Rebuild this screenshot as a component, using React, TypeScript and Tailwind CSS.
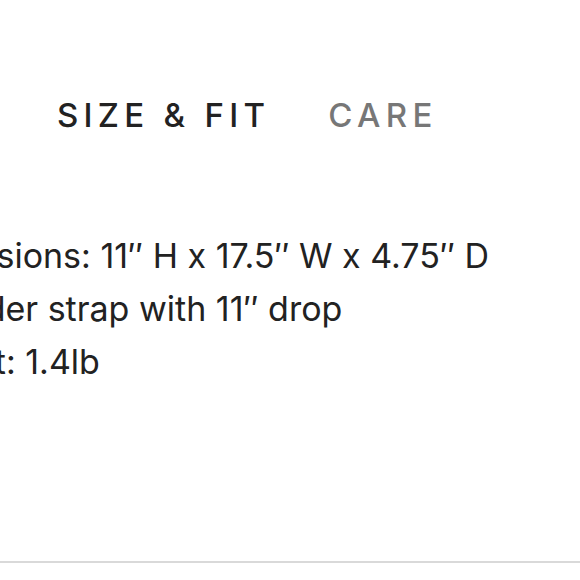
export default function App() {
  return (
    <div className="w-[580px] h-[580px] overflow-hidden bg-white font-['Inter',sans-serif] text-[#222222] flex flex-col">
      <div className="flex-1 relative">
        <div className="flex pt-[95px] pl-[57px] gap-[58px] text-[33px] leading-[40px] font-medium tracking-[0.16em]">
          <span>SIZE &amp; FIT</span>
          <span className="text-[#777777]">CARE</span>
        </div>
        <div className="mt-[94px] ml-[-106px] text-[34px] leading-[53px] whitespace-nowrap">
          <p>Dimensions: 11″ H x 17.5″ W x 4.75″ D</p>
          <p>Shoulder strap with 11″ drop</p>
          <p>Weight: 1.4lb</p>
        </div>
      </div>
      <div className="h-[2px] bg-[#d9d9d9]" />
      <div className="h-[17px] bg-white" />
    </div>
  );
}
